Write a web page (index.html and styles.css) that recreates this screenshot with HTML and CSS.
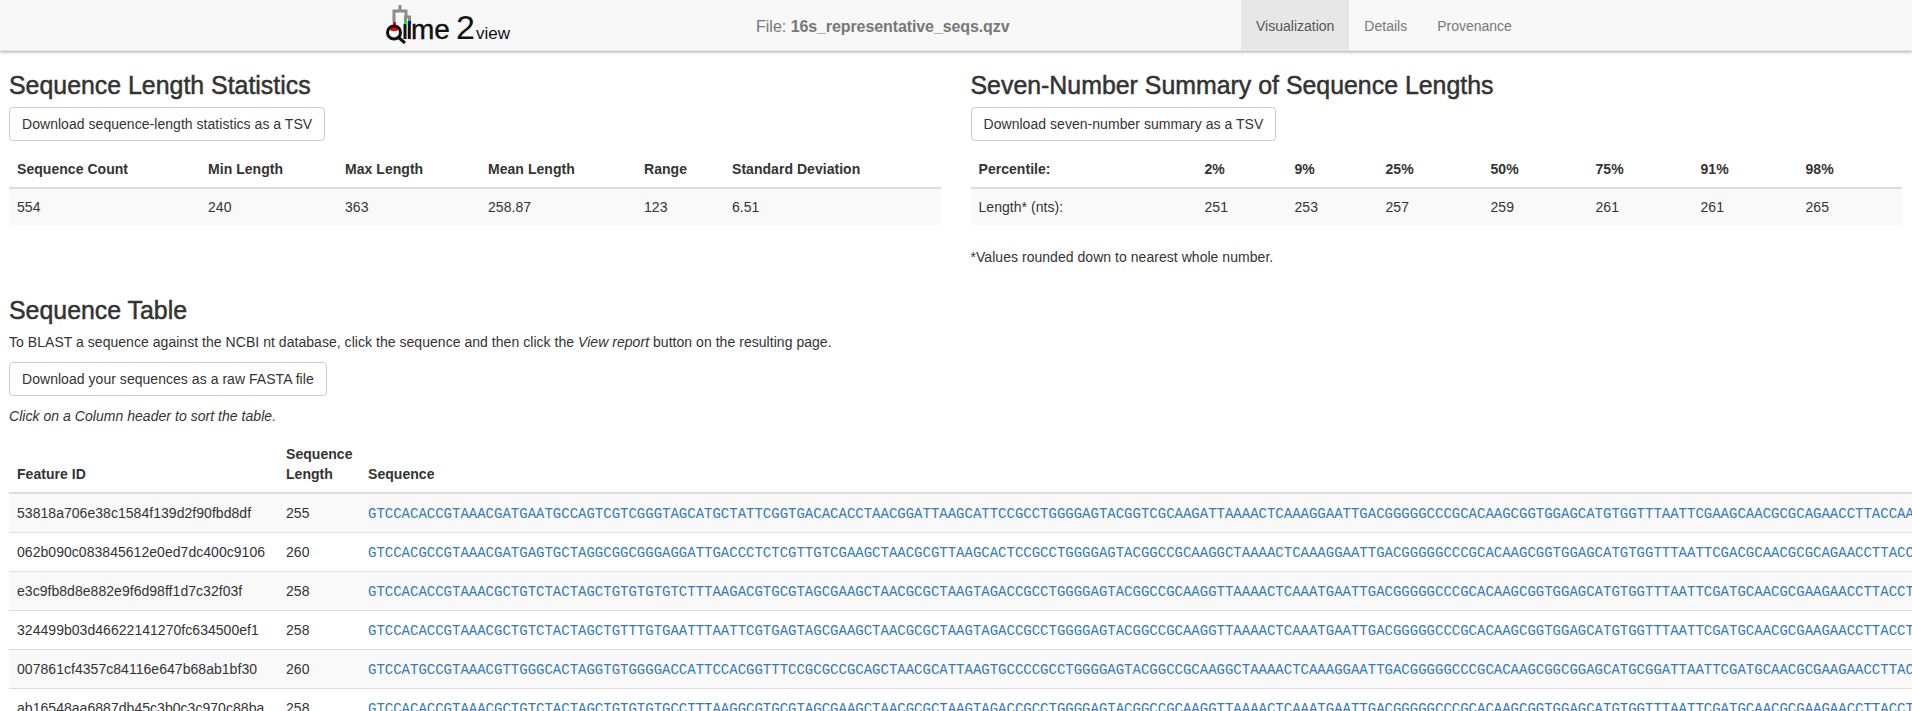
FILE: index.html
```html
<!DOCTYPE html>
<html lang="en">
<head>
  <meta charset="UTF-8">
  <title>q2view</title>
  <meta name="viewport" content="width=device-width, initial-scale=1.0">
  <link rel="stylesheet" href="styles.css">
</head>
<body>

  <nav class="navbar">
    <a class="brand" href="#">
      <svg class="logo" width="128" height="46" viewBox="0 0 128 46">
        <!-- little tree over the q and the i's -->
        <path class="tree" d="M9 20V9H21V15M15 9V3M20.500 19V15H24.500V19" />
        <rect x="8" y="20" width="3" height="3" fill="#f00" />
        <rect x="19" y="19" width="3.500" height="3" fill="#0f0" />
        <rect x="23" y="19" width="3" height="3" fill="#00f" />
        <rect x="5" y="25" width="8" height="4" rx="2" fill="#f00" />
        <!-- the q is a magnifying glass -->
        <circle class="lens" cx="9" cy="30.500" r="6.500" />
        <path class="lens" d="M13 35L20 41" />
        <path class="lens" d="M20 22V37M24.300 22V37" />
        <text class="logo-word" x="26" y="37">me</text>
        <text class="logo-two" x="71" y="37">2</text>
        <text class="logo-view" x="91" y="37">view</text>
      </svg>
    </a>
    <div class="file-name">File: <strong>16s_representative_seqs.qzv</strong></div>
    <ul class="nav-tabs">
      <li class="active"><a href="#">Visualization</a></li>
      <li><a href="#">Details</a></li>
      <li><a href="#">Provenance</a></li>
    </ul>
  </nav>

  <main class="content">
    <div class="summary-row">
      <section>
        <h3>Sequence Length Statistics</h3>
        <a class="btn" href="#">Download sequence-length statistics as a TSV</a>
        <table class="table stats-table">
          <thead>
            <tr>
              <th>Sequence Count</th>
              <th>Min Length</th>
              <th>Max Length</th>
              <th>Mean Length</th>
              <th>Range</th>
              <th>Standard Deviation</th>
            </tr>
          </thead>
          <tbody>
            <tr>
              <td>554</td>
              <td>240</td>
              <td>363</td>
              <td>258.87</td>
              <td>123</td>
              <td>6.51</td>
            </tr>
          </tbody>
        </table>
      </section>

      <section>
        <h3>Seven-Number Summary of Sequence Lengths</h3>
        <a class="btn" href="#">Download seven-number summary as a TSV</a>
        <table class="table seven-table">
          <thead>
            <tr>
              <th>Percentile:</th>
              <th>2%</th>
              <th>9%</th>
              <th>25%</th>
              <th>50%</th>
              <th>75%</th>
              <th>91%</th>
              <th>98%</th>
            </tr>
          </thead>
          <tbody>
            <tr>
              <td>Length* (nts):</td>
              <td>251</td>
              <td>253</td>
              <td>257</td>
              <td>259</td>
              <td>261</td>
              <td>261</td>
              <td>265</td>
            </tr>
          </tbody>
        </table>
        <p class="note">*Values rounded down to nearest whole number.</p>
      </section>
    </div>

    <section class="sequences">
      <h3>Sequence Table</h3>
      <p class="blast-note">To BLAST a sequence against the NCBI nt database, click the sequence and then click the <em>View report</em> button on the resulting page.</p>
      <a class="btn" href="#">Download your sequences as a raw FASTA file</a>
      <p class="sort-note"><em>Click on a Column header to sort the table.</em></p>

      <div class="table-scroll">
        <table class="table seq-table">
          <thead>
            <tr>
              <th>Feature ID</th>
              <th>Sequence Length</th>
              <th>Sequence</th>
            </tr>
          </thead>
          <tbody>
            <tr>
              <td>53818a706e38c1584f139d2f90fbd8df</td>
              <td>255</td>
              <td><a class="seq" href="#">GTCCACACCGTAAACGATGAATGCCAGTCGTCGGGTAGCATGCTATTCGGTGACACACCTAACGGATTAAGCATTCCGCCTGGGGAGTACGGTCGCAAGATTAAAACTCAAAGGAATTGACGGGGGCCCGCACAAGCGGTGGAGCATGTGGTTTAATTCGAAGCAACGCGCAGAACCTTACCAA</a></td>
            </tr>
            <tr>
              <td>062b090c083845612e0ed7dc400c9106</td>
              <td>260</td>
              <td><a class="seq" href="#">GTCCACGCCGTAAACGATGAGTGCTAGGCGGCGGGAGGATTGACCCTCTCGTTGTCGAAGCTAACGCGTTAAGCACTCCGCCTGGGGAGTACGGCCGCAAGGCTAAAACTCAAAGGAATTGACGGGGGCCCGCACAAGCGGTGGAGCATGTGGTTTAATTCGACGCAACGCGCAGAACCTTACCA</a></td>
            </tr>
            <tr>
              <td>e3c9fb8d8e882e9f6d98ff1d7c32f03f</td>
              <td>258</td>
              <td><a class="seq" href="#">GTCCACACCGTAAACGCTGTCTACTAGCTGTGTGTGTCTTTAAGACGTGCGTAGCGAAGCTAACGCGCTAAGTAGACCGCCTGGGGAGTACGGCCGCAAGGTTAAAACTCAAATGAATTGACGGGGGCCCGCACAAGCGGTGGAGCATGTGGTTTAATTCGATGCAACGCGAAGAACCTTACCTA</a></td>
            </tr>
            <tr>
              <td>324499b03d46622141270fc634500ef1</td>
              <td>258</td>
              <td><a class="seq" href="#">GTCCACACCGTAAACGCTGTCTACTAGCTGTTTGTGAATTTAATTCGTGAGTAGCGAAGCTAACGCGCTAAGTAGACCGCCTGGGGAGTACGGCCGCAAGGTTAAAACTCAAATGAATTGACGGGGGCCCGCACAAGCGGTGGAGCATGTGGTTTAATTCGATGCAACGCGAAGAACCTTACCTA</a></td>
            </tr>
            <tr>
              <td>007861cf4357c84116e647b68ab1bf30</td>
              <td>260</td>
              <td><a class="seq" href="#">GTCCATGCCGTAAACGTTGGGCACTAGGTGTGGGGACCATTCCACGGTTTCCGCGCCGCAGCTAACGCATTAAGTGCCCCGCCTGGGGAGTACGGCCGCAAGGCTAAAACTCAAAGGAATTGACGGGGGCCCGCACAAGCGGCGGAGCATGCGGATTAATTCGATGCAACGCGAAGAACCTTACC</a></td>
            </tr>
            <tr>
              <td>ab16548aa6887db45c3b0c3c970c88ba</td>
              <td>258</td>
              <td><a class="seq" href="#">GTCCACACCGTAAACGCTGTCTACTAGCTGTGTGTGCCTTTAAGGCGTGCGTAGCGAAGCTAACGCGCTAAGTAGACCGCCTGGGGAGTACGGCCGCAAGGTTAAAACTCAAATGAATTGACGGGGGCCCGCACAAGCGGTGGAGCATGTGGTTTAATTCGATGCAACGCGAAGAACCTTACCTA</a></td>
            </tr>
          </tbody>
        </table>
      </div>
    </section>
  </main>

</body>
</html>
```

FILE: styles.css
```css
* {
  box-sizing: border-box;
}

html, body {
  height: 711px;
  overflow: hidden;
}

body {
  margin: 0;
  font-family: "Liberation Sans", Arial, sans-serif;
  font-size: 14px;
  line-height: 20px;
  letter-spacing: 0.04px;
  color: #333;
  background-color: #fff;
}

a {
  text-decoration: none;
}

/* top bar */
.navbar {
  display: flex;
  height: 51px;
  background-color: #f8f8f8;
  border-bottom: 1px solid #e7e7e7;
  box-shadow: 0 1px 3px rgba(0, 0, 0, 0.35);
}

.brand {
  display: block;
  width: 371px;
  margin-left: 385px;
  padding-top: 2px;
}

.logo {
  display: block;
}

.tree {
  fill: none;
  stroke: #8c8c8c;
  stroke-width: 3;
}

.lens {
  fill: none;
  stroke: #111;
  stroke-width: 3;
}

.logo-word, .logo-two, .logo-view {
  font-family: "Liberation Sans", Arial, sans-serif;
  letter-spacing: 0;
  fill: #111;
}

.logo-word {
  font-size: 28px;
  stroke: #111;
  stroke-width: 0.4;
}

.logo-two {
  font-size: 34px;
}

.logo-view {
  font-size: 17px;
}

.file-name {
  width: 485px;
  padding-top: 17px;
  font-size: 16px;
  letter-spacing: 0;
  color: #777;
}

.file-name strong {
  letter-spacing: -0.1px;
}

.nav-tabs {
  display: flex;
  margin: 0;
  padding: 0;
  list-style: none;
  letter-spacing: 0;
}

.nav-tabs a {
  display: block;
  height: 50px;
  padding: 16px 15px;
  color: #777;
}

.nav-tabs .active a {
  color: #555;
  background-color: #e7e7e7;
}

/* page body */
.content {
  padding: 0 10px 0 9px;
}

.summary-row {
  display: grid;
  grid-template-columns: 931.500px 931.500px;
  gap: 30px;
}

h3 {
  margin: 21px 0 9px;
  font-size: 24.900px;
  line-height: 26px;
  font-weight: 500;
  letter-spacing: 0;
  -webkit-text-stroke: 0.5px #333;
}

.btn {
  display: inline-block;
  height: 34px;
  padding: 6px 12px;
  color: #333;
  background-color: #fff;
  border: 1px solid #ccc;
  border-radius: 4px;
}

.table {
  border-collapse: collapse;
  width: 100%;
  table-layout: fixed;
}

.table th {
  padding: 8px;
  text-align: left;
  vertical-align: bottom;
  border-bottom: 2px solid #ddd;
}

.table td {
  padding: 8px;
}

.table tbody tr:nth-child(odd) {
  background-color: #f9f9f9;
}

.stats-table, .seven-table {
  margin-top: 10px;
}

.stats-table th:nth-child(1) { width: 191px; }
.stats-table th:nth-child(2) { width: 137px; }
.stats-table th:nth-child(3) { width: 143px; }
.stats-table th:nth-child(4) { width: 156px; }
.stats-table th:nth-child(5) { width: 88px; }

.seven-table th:nth-child(1) { width: 226px; }
.seven-table th:nth-child(2) { width: 90px; }
.seven-table th:nth-child(3) { width: 91px; }
.seven-table th:nth-child(4) { width: 105px; }
.seven-table th:nth-child(5) { width: 105px; }
.seven-table th:nth-child(6) { width: 105px; }
.seven-table th:nth-child(7) { width: 105px; }

.note {
  margin: 22px 0 0;
}

.sequences h3 {
  margin-top: 30px;
}

.blast-note {
  margin: 9px 0 10px;
}

.sort-note {
  margin: 10px 0;
}

.table-scroll {
  margin-right: -10px;
  overflow: hidden;
}

.seq-table th:nth-child(1) { width: 269px; }
.seq-table th:nth-child(2) { width: 82px; }

.seq-table td {
  padding: 9px 8px;
  white-space: nowrap;
  border-bottom: 1px solid #ddd;
}

.seq {
  font-family: "Liberation Mono", "Courier New", monospace;
  line-height: 1;
  letter-spacing: 0;
  color: #337ab7;
}
```
